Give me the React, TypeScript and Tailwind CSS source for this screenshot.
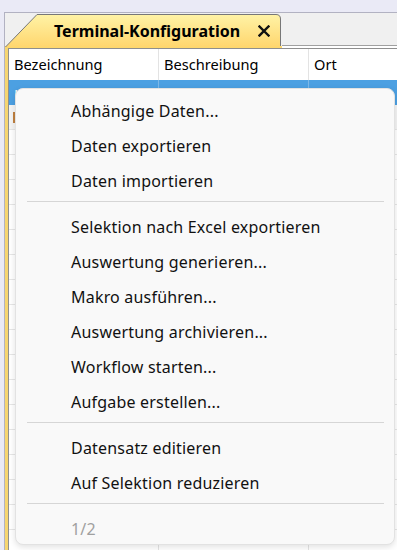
import React from 'react';

const menuGroups: string[][] = [
  ['Abhängige Daten...', 'Daten exportieren', 'Daten importieren'],
  [
    'Selektion nach Excel exportieren',
    'Auswertung generieren...',
    'Makro ausführen...',
    'Auswertung archivieren...',
    'Workflow starten...',
    'Aufgabe erstellen...',
  ],
  ['Datensatz editieren', 'Auf Selektion reduzieren'],
];

const columns = [
  { title: 'Bezeichnung', width: 'w-[150px]' },
  { title: 'Beschreibung', width: 'w-[150px]' },
  { title: 'Ort', width: 'flex-1' },
];

const TabShape: React.FC = () => (
  <svg className="absolute inset-0" width="277" height="34" viewBox="0 0 277 34">
    <defs>
      <linearGradient id="tabFill" x1="0" y1="0" x2="0" y2="1">
        <stop offset="0" stopColor="#fff3a6" />
        <stop offset="1" stopColor="#ffd66e" />
      </linearGradient>
    </defs>
    <path d="M0.5 34 L32 1.5 H271 Q275.5 1.5 275.5 6 V34 Z" fill="url(#tabFill)" />
    <path d="M0.5 34 L32 1.5 H271 Q275.5 1.5 275.5 6 V33" fill="none" stroke="#777" strokeWidth="1" />
  </svg>
);

const App: React.FC = () => {
  const rows = Array.from({ length: 18 });

  return (
    <div
      className="relative w-[397px] h-[550px] overflow-hidden bg-[#eaeaf6]"
      style={{ fontFamily: '"Noto Sans", "Open Sans", sans-serif' }}
    >
      {/* Window */}
      <div className="mt-[12px] ml-[4px] h-[538px] bg-[#f0f0f0] border-l border-t border-[#b2b2c2] flex flex-col">
        {/* Tab strip */}
        <div className="flex h-[33px] shrink-0">
          <div className="relative w-[277px] h-[33px]">
            <TabShape />
            <div className="relative flex items-center h-full pl-[49px] gap-[18px]">
              <span className="text-[16px] font-bold text-black leading-none pt-[2px]">Terminal-Konfiguration</span>
              <svg width="12" height="12" viewBox="0 0 12 12" className="mt-[3px]">
                <path d="M1.5 1.5 L10.5 10.5 M10.5 1.5 L1.5 10.5" stroke="#111" strokeWidth="2.4" strokeLinecap="square" />
              </svg>
            </div>
          </div>
          <div className="flex-1 border-b border-[#a0a0a0]" />
        </div>

        {/* Panel */}
        <div className="flex-1 flex flex-col border-l-[3px] border-[#f6d571]">
          <div className="flex h-[2px] shrink-0">
            <div className="w-[274px] bg-[#fdd86c]" />
            <div className="flex-1 bg-white" />
          </div>
          <div className="flex-1 bg-white border-l border-t border-[#8e8e8e] flex flex-col text-[14.6px] text-black">
            {/* Header */}
            <div className="flex h-[31px] shrink-0">
              {columns.map((c, i) => (
                <div
                  key={c.title}
                  className={`${c.width} flex items-center pl-[5px] ${i < 2 ? 'border-r border-[#e3e3e3]' : ''}`}
                >
                  {c.title}
                </div>
              ))}
            </div>
            {/* Selected row */}
            <div className="flex h-[25px] shrink-0 bg-[#4ca0e2] text-white">
              <div className="w-[150px] pl-[5px] pt-[4px] border-r border-[#7db8e8] whitespace-nowrap overflow-hidden">Haupteingang nacht</div>
              <div className="w-[150px] pl-[5px] pt-[4px] border-r border-[#7db8e8] whitespace-nowrap overflow-hidden">Spontan</div>
              <div className="flex-1 pl-[5px] pt-[4px] whitespace-nowrap overflow-hidden">Eingang</div>
            </div>
            {/* Other rows */}
            {rows.map((_, r) => (
              <div
                key={r}
                className={`flex h-[25px] shrink-0 border-b border-[#e6e6e6] ${r === 0 ? 'bg-[#f4f4f4]' : 'bg-white'}`}
              >
                <div className="w-[150px] pl-[4px] pt-[7px] border-r border-[#e3e3e3]">
                  {r === 0 && <div className="w-[2px] h-[11px] bg-[#c08040]" />}
                </div>
                <div className="w-[150px] border-r border-[#e3e3e3]" />
                <div className="flex-1" />
              </div>
            ))}
          </div>
        </div>
      </div>

      {/* Context menu */}
      <div className="absolute left-[15px] top-[88px] w-[380px] h-[457px] rounded-[8px] bg-[#f9f9f9] border border-[#e2e2e2] shadow-[0_2px_6px_rgba(0,0,0,0.12)] pt-[4px] text-[16px] tracking-[0.2px] text-[#111]">
        {menuGroups.map((group, gi) => (
          <div key={gi}>
            {group.map((label) => (
              <div key={label} className="h-[35px] flex items-center pl-[55px] whitespace-nowrap">
                {label}
              </div>
            ))}
            <div className="pt-[3px] pb-[7px] pl-[11px] pr-[10px]">
              <div className="h-px w-full bg-[#d6d6d6]" />
            </div>
          </div>
        ))}
        <div className="h-[35px] flex items-center pl-[55px] text-[#a0a0a0]">1/2</div>
      </div>
    </div>
  );
};

export default App;
